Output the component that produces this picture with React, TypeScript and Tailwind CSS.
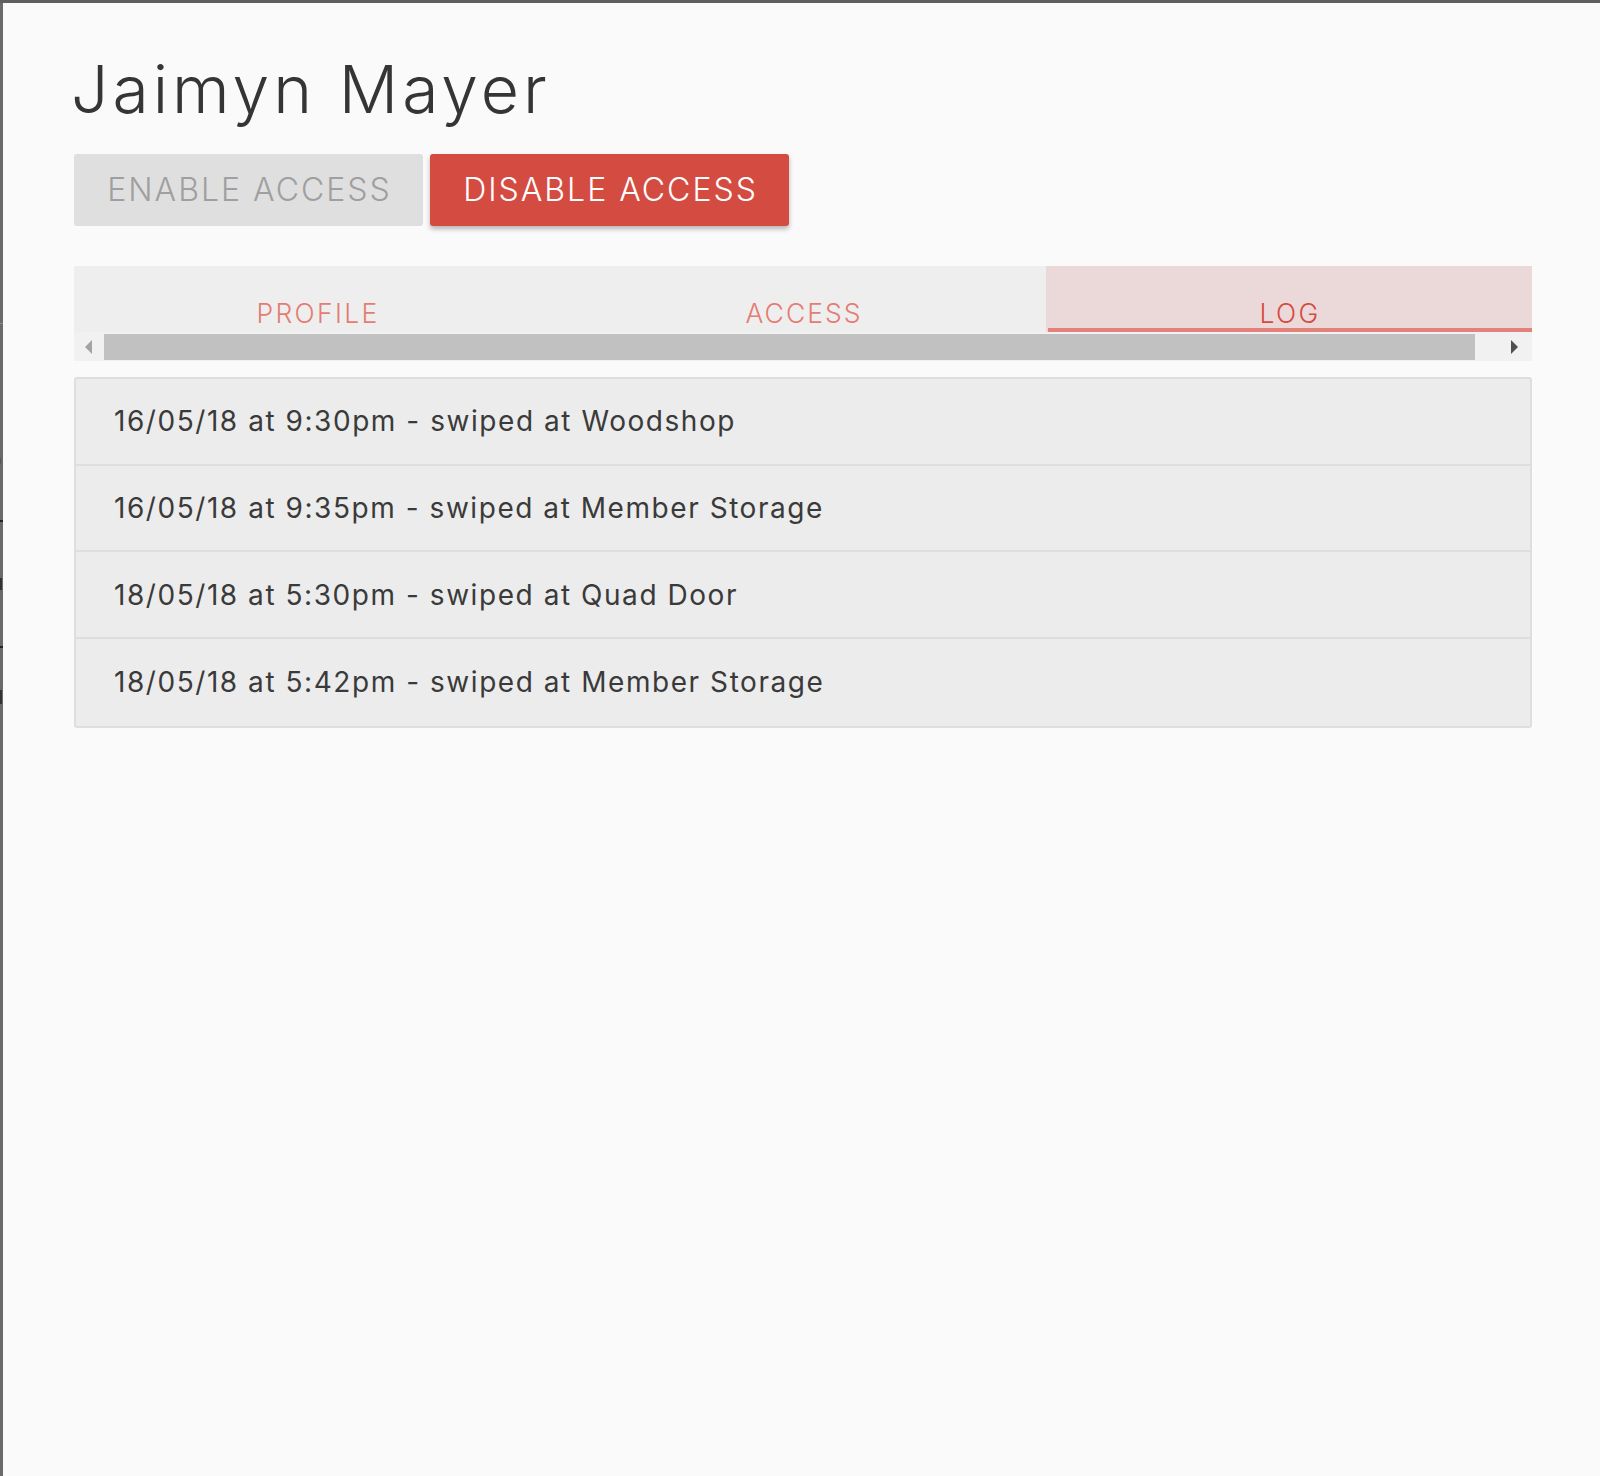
import React from "react";

const rows = [
  "16/05/18 at 9:30pm - swiped at Woodshop",
  "16/05/18 at 9:35pm - swiped at Member Storage",
  "18/05/18 at 5:30pm - swiped at Quad Door",
  "18/05/18 at 5:42pm - swiped at Member Storage",
];

export default function App() {
  return (
    <div
      className="flex min-h-[1476px] w-full bg-[#5f5f5f] pt-[3px]"
      style={{ fontFamily: "Inter, 'Noto Sans', sans-serif" }}
    >
      <div className="flex w-[3px] flex-col bg-[#6a6a6a]">
        <div className="mt-[320px] h-[1px] w-[3px] bg-[#8a8a8a]" />
        <div className="mt-[134px] h-[6px] w-[1px] bg-[#555]" />
        <div className="mt-[56px] h-[2px] w-[3px] bg-[#222]" />
        <div className="mt-[56px] h-[12px] w-[2px] bg-[#333]" />
        <div className="mt-[56px] h-[2px] w-[3px] bg-[#222]" />
        <div className="mt-[42px] h-[14px] w-[2px] bg-[#333]" />
      </div>
      <div className="flex flex-1 flex-col bg-[#fafafa] pl-[71px] pr-[68px] pt-[46px]">
        <h1 className="-ml-[3px] h-[80px] text-[66px] font-light leading-[80px] tracking-[4px] text-[#353535]">
          Jaimyn Mayer
        </h1>
        <div className="mt-[25px] flex gap-[7px]">
          <button className="flex h-[72px] w-[349px] items-center justify-center rounded-[3px] bg-[#dfdfdf] pl-[2px] text-[32px] font-light leading-none tracking-[2px] text-[#9f9f9f]">
            ENABLE ACCESS
          </button>
          <button className="flex h-[72px] w-[359px] items-center justify-center rounded-[3px] bg-[#d44c41] pl-[2px] text-[32px] font-light leading-none tracking-[2px] text-white shadow-[0_3px_5px_rgba(0,0,0,0.28)]">
            DISABLE ACCESS
          </button>
        </div>
        <div className="mt-[40px] flex w-[1458px] flex-col">
          <div className="flex h-[66px] bg-[#eeeeee]">
            <div className="flex flex-1 items-end justify-center pb-[6px] pl-[2px] text-[26.5px] font-light leading-none tracking-[2.3px] text-[#e57c73]">
              PROFILE
            </div>
            <div className="flex flex-1 items-end justify-center pb-[6px] pl-[2px] text-[26.5px] font-light leading-none tracking-[2px] text-[#e57c73]">
              ACCESS
            </div>
            <div className="relative flex flex-1 items-end justify-center bg-[#ebd9d9] pb-[6px] pl-[2px] text-[26.5px] font-light leading-none tracking-[2.3px] text-[#d64a3f]">
              LOG
              <div className="absolute bottom-0 left-[2px] right-0 h-[4px] bg-[#e3827b]" />
            </div>
          </div>
          <div className="flex h-[29px] items-center bg-[#f1f1f1]">
            <div className="flex w-[30px] items-center justify-center">
              <svg width="8" height="14" viewBox="0 0 8 14">
                <polygon points="7,0 7,14 0,7" fill="#a3a3a3" />
              </svg>
            </div>
            <div className="h-[26px] w-[1371px] bg-[#c1c1c1]" />
            <div className="flex flex-1 items-center justify-center pl-[22px]">
              <svg width="8" height="14" viewBox="0 0 8 14">
                <polygon points="0,0 0,14 7,7" fill="#505050" />
              </svg>
            </div>
          </div>
        </div>
        <div className="mt-[16px] w-[1458px] overflow-hidden rounded-[3px] border-[2px] border-[#dedede] bg-[#ececec]">
          {rows.map((r, i) => (
            <div
              key={i}
              className={
                "flex h-[86.7px] items-center pl-[38px] text-[28px] font-normal leading-none tracking-[1.55px] text-[#3a3a3a] " +
                (i < rows.length - 1 ? "border-b-[2px] border-[#dedede]" : "")
              }
            >
              {r}
            </div>
          ))}
        </div>
      </div>
    </div>
  );
}
